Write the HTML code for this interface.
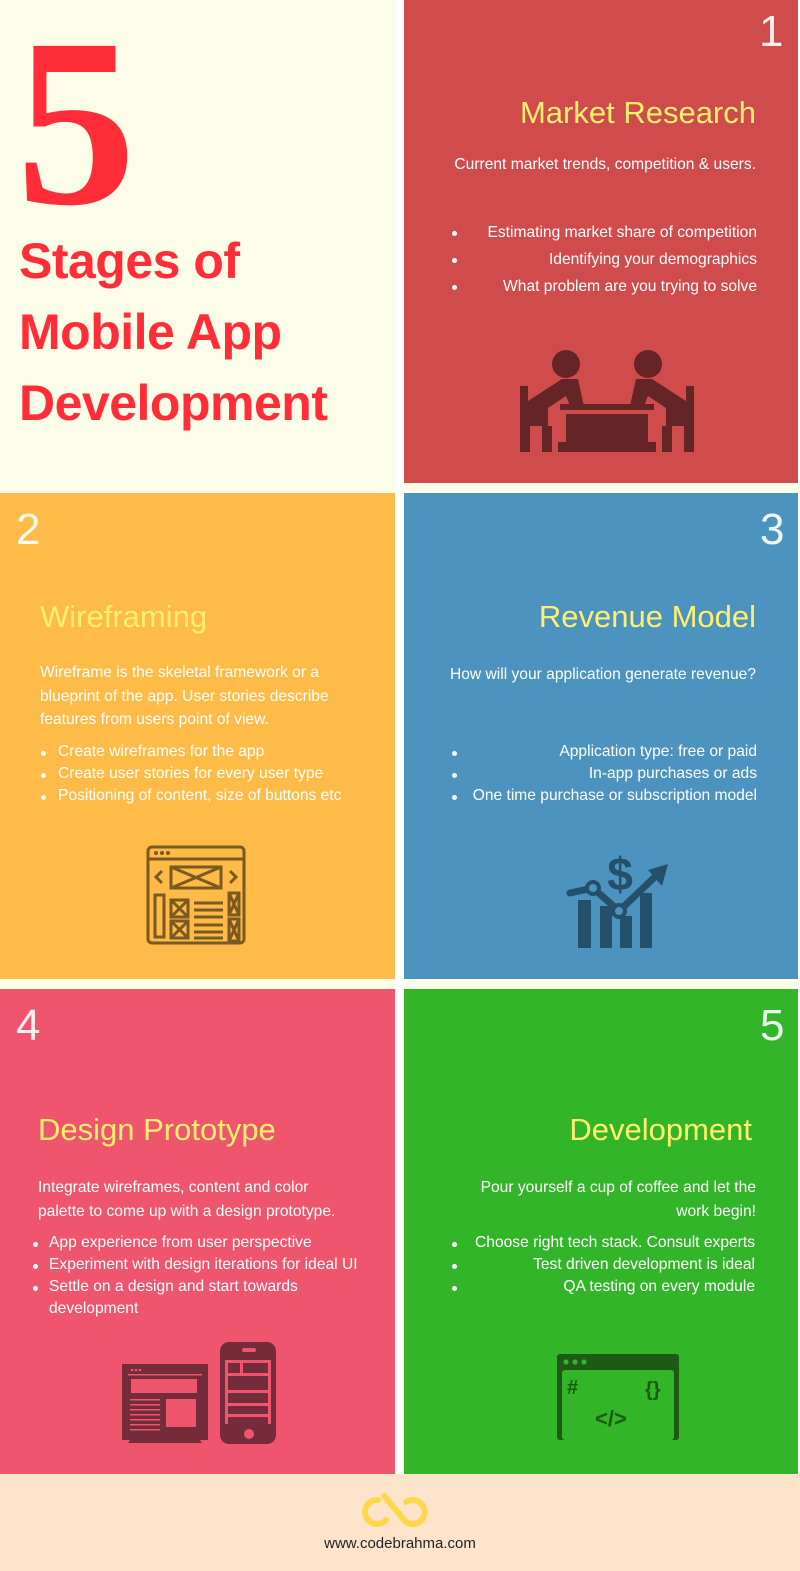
<!DOCTYPE html>
<html><head><meta charset="utf-8"><style>
*{margin:0;padding:0;box-sizing:border-box}
body{width:800px;height:1571px;background:#fff;position:relative;overflow:hidden;font-family:"Liberation Sans",sans-serif;color:#fff}
.p{position:absolute}
.num{position:absolute;font-size:44px;font-weight:300;color:#fff;opacity:.9;line-height:1}
.h{position:absolute;font-size:31px;color:#fff06e;line-height:1;white-space:nowrap}
.t{position:absolute;font-size:15.6px;line-height:23.5px;white-space:nowrap}
.b{position:absolute;font-size:15.6px;line-height:22px;white-space:nowrap}
.b div{position:relative}
.r{text-align:right}
.dot{position:absolute;width:5px;height:5px;border-radius:50%;background:#fff}
</style></head><body>
<div class="p" style="left:0;top:0;width:395px;height:493px;background:#fbfde9"></div>
<div class="p" style="left:404px;top:483px;width:394px;height:10px;background:#fbfde9"></div>
<div class="p" style="left:0;top:979px;width:395px;height:10px;background:#fbfde9"></div>
<div class="p" style="left:404px;top:979px;width:394px;height:10px;background:#fbfde9"></div>
<div class="p" style="left:404px;top:0;width:394px;height:483px;background:#d04b4c"></div>
<div class="p" style="left:0;top:493px;width:395px;height:486px;background:#ffbb47"></div>
<div class="p" style="left:404px;top:493px;width:394px;height:486px;background:#4c93bf"></div>
<div class="p" style="left:0;top:989px;width:395px;height:485px;background:#ef566e"></div>
<div class="p" style="left:404px;top:989px;width:394px;height:485px;background:#33b52a"></div>
<div class="p" style="left:0;top:1474px;width:800px;height:97px;background:#ffe4cc"></div>

<!-- title -->
<div class="p" style="left:16px;top:2px;font-family:'Liberation Serif',serif;font-weight:bold;font-size:240px;line-height:1;color:#ff2d38">5</div>
<div class="p" style="left:19px;top:226px;font-weight:bold;font-size:50px;line-height:71px;color:#ff2d38;letter-spacing:-0.5px">Stages of<br>Mobile App<br>Development</div>

<!-- 1 -->
<div class="num" style="left:759px;top:10px">1</div>
<div class="h" style="right:44px;top:97px">Market Research</div>
<div class="t r" style="right:44px;top:153px">Current market trends, competition &amp; users.</div>
<div class="b r" style="right:43px;top:219px;line-height:27px"><div>Estimating market share of competition</div><div>Identifying your demographics</div><div>What problem are you trying to solve</div></div>
<div class="dot" style="left:452px;top:231px"></div><div class="dot" style="left:452px;top:258px"></div><div class="dot" style="left:452px;top:285px"></div>
<svg class="p" style="left:518px;top:346px" width="178" height="106" viewBox="0 0 178 106" fill="#652426">
<circle cx="48" cy="18" r="14"/><circle cx="130" cy="18" r="14"/>
<polygon points="2,40 10,40 10,55 44,33 60,33 66,60 52,60 48,50 30,62 30,80 34,80 34,106 24,106 24,80 12,80 12,106 2,106"/>
<polygon points="176,40 168,40 168,55 134,33 118,33 112,60 126,60 130,50 148,62 148,80 144,80 144,106 154,106 154,80 166,80 166,106 176,106"/>
<rect x="40" y="96" width="98" height="10"/>
<rect x="48" y="68" width="82" height="38"/>
<rect x="42" y="58" width="94" height="6"/>
</svg>

<!-- 2 -->
<div class="num" style="left:16px;top:508px">2</div>
<div class="h" style="left:40px;top:601px">Wireframing</div>
<div class="t" style="left:40px;top:661px">Wireframe is the skeletal framework or a<br>blueprint of the app. User stories describe<br>features from users point of view.</div>
<div class="b" style="left:58px;top:741px"><div>Create wireframes for the app</div><div>Create user stories for every user type</div><div>Positioning of content, size of buttons etc</div></div>
<div class="dot" style="left:41px;top:751px"></div><div class="dot" style="left:41px;top:773px"></div><div class="dot" style="left:41px;top:795px"></div>
<svg class="p" style="left:146px;top:845px" width="100" height="101" viewBox="0 0 100 101" fill="none" stroke="#7a5a20" stroke-width="3">
<rect x="2" y="2" width="96" height="96" rx="4"/><line x1="2" y1="14" x2="98" y2="14"/>
<g fill="#7a5a20" stroke="none"><circle cx="10" cy="8" r="2"/><circle cx="16" cy="8" r="2"/><circle cx="22" cy="8" r="2"/></g>
<rect x="25" y="22" width="50" height="21"/><path d="M25 22L75 43M75 22L25 43"/>
<path d="M16 26l-6 6 6 6M84 26l6 6-6 6"/>
<rect x="9" y="50" width="9" height="42"/>
<rect x="25" y="55" width="17" height="17"/><path d="M25 55l17 17M42 55l-17 17"/>
<rect x="25" y="76" width="17" height="17"/><path d="M25 76l17 17M42 76l-17 17"/>
<path d="M48 58h29M48 65h29M48 72h29M48 80h29M48 87h29M48 93h29"/>
<rect x="83" y="48" width="10" height="22"/><path d="M83 48l10 22M93 48l-10 22"/>
<rect x="83" y="74" width="10" height="22"/><path d="M83 74l10 22M93 74l-10 22"/>
</svg>

<!-- 3 -->
<div class="num" style="left:760px;top:508px">3</div>
<div class="h" style="right:44px;top:601px">Revenue Model</div>
<div class="t r" style="right:44px;top:663px">How will your application generate revenue?</div>
<div class="b r" style="right:43px;top:741px"><div>Application type: free or paid</div><div>In-app purchases or ads</div><div>One time purchase or subscription model</div></div>
<div class="dot" style="left:452px;top:751px"></div><div class="dot" style="left:452px;top:773px"></div><div class="dot" style="left:452px;top:795px"></div>
<svg class="p" style="left:566px;top:846px" width="104" height="102" viewBox="0 0 104 102" fill="#24506b">
<text x="54" y="44" font-family="Liberation Sans" font-weight="bold" font-size="46" fill="#24506b" text-anchor="middle">$</text>
<rect x="12" y="54" width="13" height="48"/><rect x="34" y="60" width="12" height="42"/><rect x="54" y="70" width="12" height="32"/><rect x="74" y="47" width="12" height="55"/>
<path d="M4 47L27 42L53 65L92 28" fill="none" stroke="#24506b" stroke-width="7" stroke-linecap="round"/>
<polygon points="82,24 102,18 96,40"/>
<circle cx="27" cy="42" r="6" fill="#4c93bf" stroke="#24506b" stroke-width="4"/><circle cx="53" cy="65" r="6" fill="#4c93bf" stroke="#24506b" stroke-width="4"/>
</svg>

<!-- 4 -->
<div class="num" style="left:16px;top:1004px">4</div>
<div class="h" style="left:38px;top:1114px">Design Prototype</div>
<div class="t" style="left:38px;top:1176px">Integrate wireframes, content and color<br>palette to come up with a design prototype.</div>
<div class="b" style="left:49px;top:1232px"><div>App experience from user perspective</div><div>Experiment with design iterations for ideal UI</div><div>Settle on a design and start towards<br>development</div></div>
<div class="dot" style="left:33px;top:1242px"></div><div class="dot" style="left:33px;top:1264px"></div><div class="dot" style="left:33px;top:1286px"></div>
<svg class="p" style="left:122px;top:1342px" width="155" height="103" viewBox="0 0 155 103" fill="#742b3a">
<rect x="3" y="22" width="80" height="76"/>
<rect x="0" y="22" width="4" height="76"/><rect x="82" y="22" width="4" height="76"/>
<polygon points="6,101 80,101 74,92 12,92"/>
<g fill="#ef566e"><circle cx="10" cy="28" r="1.3"/><circle cx="14" cy="28" r="1.3"/><circle cx="18" cy="28" r="1.3"/>
<rect x="6" y="32" width="74" height="1.5"/><rect x="9" y="37" width="66" height="14"/>
<rect x="8" y="57" width="30" height="1.5"/><rect x="8" y="62" width="30" height="1.5"/><rect x="8" y="67" width="30" height="1.5"/><rect x="8" y="72" width="30" height="1.5"/><rect x="8" y="77" width="30" height="1.5"/><rect x="8" y="82" width="30" height="1.5"/><rect x="8" y="87" width="30" height="1.5"/>
<rect x="44" y="57" width="30" height="28"/></g>
<rect x="98" y="0" width="56" height="102" rx="9"/>
<g fill="#ef566e"><rect x="120" y="6" width="14" height="4" rx="2"/><circle cx="127" cy="92" r="5"/>
<rect x="103" y="18" width="46" height="64"/></g>
<g><rect x="106" y="21" width="12" height="10"/><rect x="121" y="21" width="25" height="10"/><rect x="106" y="34" width="40" height="14"/><rect x="106" y="51" width="40" height="10"/><rect x="106" y="64" width="40" height="8"/><rect x="106" y="75" width="40" height="7"/></g>
</svg>

<!-- 5 -->
<div class="num" style="left:760px;top:1004px">5</div>
<div class="h" style="right:48px;top:1114px">Development</div>
<div class="t r" style="right:44px;top:1176px">Pour yourself a cup of coffee and let the<br>work begin!</div>
<div class="b r" style="right:45px;top:1232px"><div>Choose right tech stack. Consult experts</div><div>Test driven development is ideal</div><div>QA testing on every module</div></div>
<div class="dot" style="left:452px;top:1242px"></div><div class="dot" style="left:452px;top:1264px"></div><div class="dot" style="left:452px;top:1286px"></div>
<svg class="p" style="left:557px;top:1354px" width="124" height="86" viewBox="0 0 124 86">
<rect x="0" y="0" width="122" height="86" rx="3" fill="#1c5a16"/>
<rect x="5" y="16" width="112" height="70" rx="3" fill="#33b52a"/>
<g fill="#33b52a"><circle cx="9" cy="8" r="2.6"/><circle cx="18" cy="8" r="2.6"/><circle cx="27" cy="8" r="2.6"/></g>
<text x="10" y="40" font-family="Liberation Sans" font-weight="bold" font-size="20" fill="#1c5a16">#</text>
<text x="88" y="42" font-family="Liberation Sans" font-weight="bold" font-size="20" fill="#1c5a16">{}</text>
<text x="38" y="72" font-family="Liberation Sans" font-weight="bold" font-size="22" fill="#1c5a16">&lt;/&gt;</text>
</svg>

<!-- footer -->
<svg class="p" style="left:362px;top:1492px" width="72" height="38" viewBox="0 0 72 38" fill="none" stroke="#ffd84a" stroke-width="6" stroke-linecap="round">
<path d="M16 8a12 12 0 1 0 8 20"/><path d="M22 4L44 30a12 12 0 1 0 0-20"/>
</svg>
<div class="p" style="left:0;width:800px;top:1535px;text-align:center;font-size:15px;color:#222">www.codebrahma.com</div>
</body></html>
